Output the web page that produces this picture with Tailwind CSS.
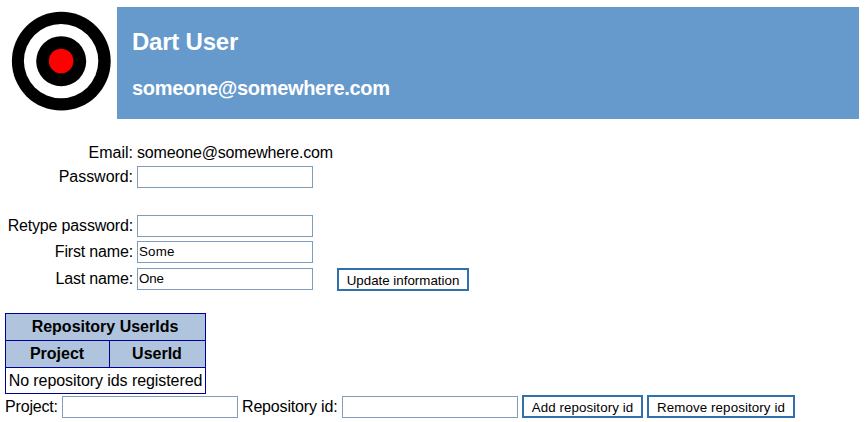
<!DOCTYPE html>
<html lang="en">
<head>
<meta charset="utf-8">
<title>Dart User</title>
<script src="https://cdn.jsdelivr.net/npm/@tailwindcss/browser@4"></script>
</head>
<body class="bg-white text-black text-[16px] leading-[18px] tracking-[-0.17px] font-['Liberation_Sans',Arial,sans-serif] whitespace-nowrap overflow-hidden">
<div class="h-[422px] pl-[5px] pr-[7px] pt-[7px]">
  <header class="flex h-[112px]">
    <svg class="w-[112px] h-[112px] shrink-0" viewBox="0 0 112 112">
      <circle cx="56.3" cy="54.2" r="49.4" fill="#000"/>
      <circle cx="56.1" cy="54.1" r="37.2" fill="#fff"/>
      <circle cx="56.2" cy="54.2" r="25" fill="#000"/>
      <circle cx="56.1" cy="54" r="12.3" fill="#f00"/>
    </svg>
    <div class="grow bg-[#6699cc] text-white font-bold pl-[15px] pt-[21px]">
      <h1 class="text-[24px] leading-[28px] tracking-[-0.22px]">Dart User</h1>
      <h2 class="text-[20px] leading-[24px] tracking-[-0.3px] mt-[20px]">someone@somewhere.com</h2>
    </div>
  </header>

  <form class="grid grid-cols-[128px_176px_132px] grid-rows-[22px_22px_22px_22px_23px] pt-[25px]">
    <label class="text-right tracking-normal">Email:</label><div class="pl-1">someone@somewhere.com</div><div></div>
    <label class="text-right pt-[2px] tracking-[-0.05px]">Password:</label><input type="password" class="ml-1 w-[176px] h-[22px] border border-[#7f9db9]"><div></div>
    <label class="text-right pt-[2px] mt-[27px]">Retype password:</label><input type="password" class="ml-1 mt-[27px] w-[176px] h-[22px] border border-[#7f9db9]"><div></div>
    <label class="text-right pt-[2px] mt-[31px]">First name:</label><input type="text" value="Some" class="ml-1 mt-[31px] w-[176px] h-[22px] border border-[#7f9db9] pl-px pb-[2px] text-[13.33px] tracking-[0.2px]"><div></div>
    <label class="text-right pt-[2px] mt-[36px]">Last name:</label><input type="text" value="One" class="ml-1 mt-[36px] w-[176px] h-[22px] border border-[#7f9db9] pl-px pb-[2px] text-[13.33px] tracking-[-0.1px]"><button type="button" class="ml-[28px] mt-[36px] w-[132px] h-[23px] border-2 border-[#3070ad] text-[13.33px] leading-[19px] tracking-normal pt-px">Update information</button>
  </form>

  <table class="mt-[58px] w-[200px] border-collapse table-fixed leading-[18px]">
    <colgroup><col class="w-[104px]"><col class="w-[96px]"></colgroup>
    <tr class="h-[27px] bg-[#b0c4de]"><th colspan="2" class="border border-[#000099] p-0 pr-px tracking-normal">Repository UserIds</th></tr>
    <tr class="h-[27px] bg-[#b0c4de]"><th class="border border-[#000099] p-0 pr-px tracking-normal">Project</th><th class="border border-[#000099] p-0 pr-px tracking-normal">UserId</th></tr>
    <tr class="h-[26px]"><td colspan="2" class="border border-[#000099] p-0 text-center tracking-[-0.07px]">No repository ids registered</td></tr>
  </table>

  <form class="flex pt-px">
    <label class="w-[57px] pt-[3px]">Project:</label>
    <input type="text" class="mt-px w-[176px] h-[22px] border border-[#7f9db9]">
    <label class="w-[104px] pl-1 pt-[3px]">Repository id:</label>
    <input type="text" class="mt-px w-[176px] h-[22px] border border-[#7f9db9]">
    <button type="button" class="ml-1 w-[121px] h-[23px] border-2 border-[#3070ad] text-[13.33px] leading-[19px] tracking-[0.1px] pt-px">Add repository id</button>
    <button type="button" class="ml-1 w-[148px] h-[23px] border-2 border-[#3070ad] text-[13.33px] leading-[19px] tracking-[0.1px] pt-px">Remove repository id</button>
  </form>
</div>
</body>
</html>
